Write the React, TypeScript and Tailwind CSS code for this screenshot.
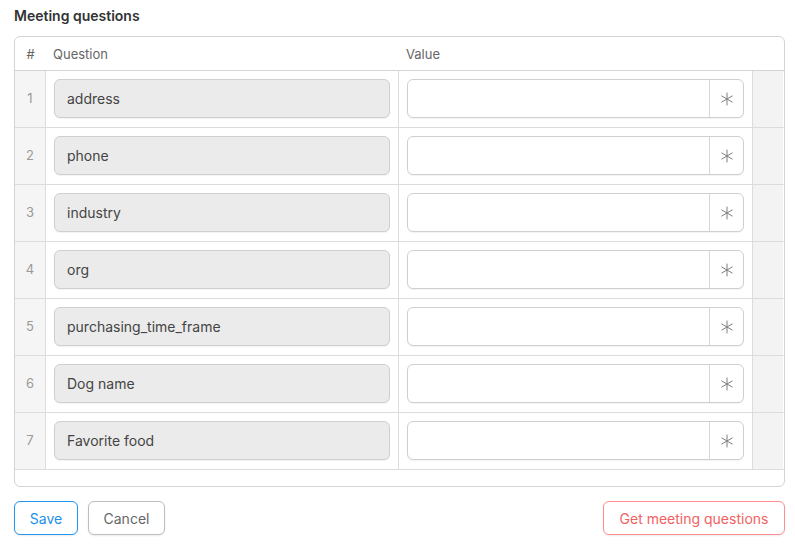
import React from 'react';

const questions = ['address', 'phone', 'industry', 'org', 'purchasing_time_frame', 'Dog name', 'Favorite food'];

function AsteriskIcon() {
  return (
    <svg width="16" height="16" viewBox="0 0 24 24" fill="none" stroke="#7e7e7e" strokeWidth="1.5" strokeLinecap="round">
      <path d="M12 3v18" />
      <path d="M4.2 7.5l15.6 9" />
      <path d="M4.2 16.5l15.6-9" />
    </svg>
  );
}

function Row({ n, label }: { n: number; label: string }) {
  return (
    <div className="grid grid-cols-[31px_353px_354px_30px] h-[57px] border-b border-[#dcdcdc]">
      <div className="bg-[#f5f5f5] border-r border-[#dcdcdc] flex items-center justify-center text-[13px] text-[#9a9a9a]">
        {n}
      </div>
      <div className="border-r border-[#dcdcdc] px-[8px] pt-[8px]">
        <div className="w-full h-[39px] rounded-[6px] border border-[#cfcfcf] bg-[#ebebeb] flex items-center px-[12px] text-[14px] text-[#444] shadow-[0_1px_1px_rgba(0,0,0,0.05)]">
          {label}
        </div>
      </div>
      <div className="border-r border-[#dcdcdc] px-[8px] pt-[8px]">
        <div className="w-full h-[39px] rounded-[6px] border border-[#cfcfcf] bg-white flex shadow-[0_1px_1px_rgba(0,0,0,0.05)]">
          <div className="flex-1" />
          <div className="w-[34px] border-l border-[#d6d6d6] flex items-center justify-center">
            <AsteriskIcon />
          </div>
        </div>
      </div>
      <div className="bg-[#f3f3f3]" />
    </div>
  );
}

export default function App() {
  return (
    <div className="w-[795px] h-[549px] bg-white pl-[14px] pr-[10px] pt-[7px]" style={{ fontFamily: 'Inter, "Liberation Sans", sans-serif' }}>
      <h2 className="text-[14px] font-semibold text-[#333] leading-[18px]">Meeting questions</h2>

      <div className="mt-[11px] w-[771px] rounded-[6px] border border-[#d4d4d4] overflow-hidden">
        <div className="grid grid-cols-[31px_353px_354px_30px] h-[34px] pt-[2px] border-b border-[#d4d4d4] items-center text-[13px] text-[#666]">
          <div className="text-center">#</div>
          <div className="pl-[7px]">Question</div>
          <div className="pl-[7px]">Value</div>
          <div />
        </div>
        {questions.map((q, i) => (
          <Row key={q} n={i + 1} label={q} />
        ))}
        <div className="h-[16px]" />
      </div>

      <div className="mt-[14px] flex items-center">
        <button className="h-[34px] w-[64px] rounded-[6px] border border-[#2196f3] text-[14px] text-[#1e8fe6] bg-white shadow-[0_1px_2px_rgba(0,0,0,0.08)]">
          Save
        </button>
        <button className="ml-[10px] h-[34px] w-[77px] rounded-[6px] border border-[#bdbdbd] text-[14px] text-[#666] bg-white shadow-[0_1px_2px_rgba(0,0,0,0.08)]">
          Cancel
        </button>
        <button className="ml-auto h-[34px] w-[182px] rounded-[6px] border border-[#ff8f8f] text-[14px] text-[#f06262] bg-white shadow-[0_1px_2px_rgba(0,0,0,0.08)]">
          Get meeting questions
        </button>
      </div>
    </div>
  );
}
